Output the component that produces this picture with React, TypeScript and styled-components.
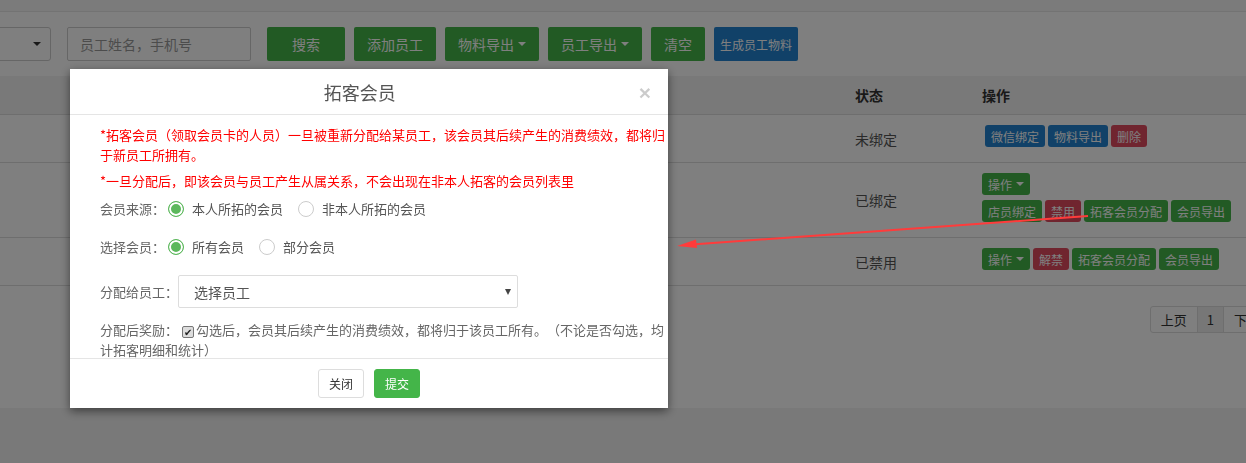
import React from 'react'
import styled, { createGlobalStyle, css } from 'styled-components'

const GlobalStyle = createGlobalStyle`
  html, body {
    margin: 0;
    padding: 0;
    overflow: hidden;
    background: #f2f2f2;
  }
  body {
    font-family: "Noto Sans CJK SC", "Liberation Sans", sans-serif;
    font-size: 14px;
    color: #333;
    text-spacing-trim: space-all;
  }
  * { box-sizing: border-box; }
`

type Tone = 'green' | 'blue' | 'red'

const tones: Record<Tone, string> = {
  green: '#44b549',
  blue: '#2283d0',
  red: '#e04a5f'
}

const Page = styled.div`
  width: 1300px;
  min-height: 463px;
  background: #f2f2f2;
`

const TopStrip = styled.div`
  height: 12px;
  background: #f7f7f7;
  border-bottom: 1px solid #e6e6e6;
`

const Main = styled.main`
  height: 396px;
  background: #fff;
`

const Toolbar = styled.div`
  display: flex;
  align-items: center;
  gap: 9px;
  height: 64px;
  padding: 15px 0;
`

const Caret = styled.span`
  display: inline-block;
  width: 0;
  height: 0;
  margin-left: 4px;
  border-top: 4px solid currentColor;
  border-left: 4px solid transparent;
  border-right: 4px solid transparent;
`

const SelectBox = styled.div`
  display: flex;
  align-items: center;
  justify-content: flex-end;
  width: 131px;
  height: 34px;
  margin-left: -80px;
  margin-right: 7px;
  padding-right: 9px;
  border: 1px solid #ccc;
  border-radius: 3px;
  color: #333;
`

const SearchInput = styled.div`
  display: flex;
  align-items: center;
  width: 184px;
  height: 34px;
  margin-right: 7px;
  padding-left: 12px;
  border: 1px solid #ccc;
  border-radius: 2px;
  color: #999;
  font-size: 14px;
`

const ToolButton = styled.button<{ $tone?: Tone; $pad?: number; $small?: boolean }>(
  props => css`
    display: flex;
    align-items: center;
    height: 34px;
    padding: 0 ${props.$pad ?? 13}px;
    border: none;
    border-radius: 2px;
    background: ${tones[props.$tone ?? 'green']};
    color: #fff;
    font-family: inherit;
    font-size: ${props.$small ? 12 : 14}px;
  `
)

const gridCols = css`
  display: grid;
  grid-template-columns: 847px 127px 1fr;
`

const HeadRow = styled.div`
  ${gridCols};
  align-items: center;
  height: 39px;
  background: #f3f3f3;
  border-bottom: 1px solid #ddd;
  font-weight: bold;
`

const Row = styled.div`
  ${gridCols};
  align-items: center;
  padding: 10px 0;
  border-bottom: 1px solid #ddd;
`

const Cell = styled.div<{ $head?: boolean }>(
  props => css`
    padding-left: 8px;
    color: ${props.$head ? '#333' : '#555'};
    line-height: 20px;
  `
)

const ActionCell = styled.div<{ $indent?: number }>(
  props => css`
    display: flex;
    flex-direction: column;
    align-items: flex-start;
    gap: 5px;
    padding: 0 0 5px ${8 + (props.$indent ?? 0)}px;
  `
)

const ActionLine = styled.div`
  display: flex;
  gap: 3px;
`

const ActBtn = styled.button<{ $tone: Tone }>(
  props => css`
    display: flex;
    align-items: center;
    height: 22px;
    padding: 0 6px;
    border: none;
    border-radius: 3px;
    background: ${tones[props.$tone]};
    color: #fff;
    font-family: inherit;
    font-size: 12px;
  `
)

const Pager = styled.div`
  display: flex;
  justify-content: flex-end;
  margin-top: 20px;
  padding-right: 29px;
`

const PageItem = styled.span<{ $active?: boolean }>(
  props => css`
    display: flex;
    align-items: center;
    height: 27px;
    padding: 0 ${props.$active ? 9 : 10}px;
    margin-left: -1px;
    border: 1px solid #ddd;
    background: ${props.$active ? '#eee' : '#fff'};
    color: #333;
    font-size: 13px;

    &:first-child {
      border-radius: 3px 0 0 3px;
    }
  `
)

const Overlay = styled.div`
  position: fixed;
  inset: 0;
  background: rgba(0, 0, 0, 0.5);
`

const Dialog = styled.section`
  position: absolute;
  left: 70px;
  top: 69px;
  width: 598px;
  background: #fff;
  box-shadow: 0 3px 9px rgba(0, 0, 0, 0.5);
`

const DialogHeader = styled.header`
  display: flex;
  align-items: center;
  height: 46px;
  padding: 0 15px;
  border-bottom: 1px solid #e5e5e5;
`

const DialogTitle = styled.h4`
  flex: 1;
  margin: 0;
  text-align: center;
  font-size: 18px;
  font-weight: normal;
  color: #555;
`

const CloseButton = styled.button`
  margin: 2px 2px 0 4px;
  padding: 0;
  border: none;
  background: none;
  font-family: "Liberation Sans", Arial, sans-serif;
  font-size: 21px;
  font-weight: bold;
  line-height: 1;
  color: #000;
  opacity: 0.2;
`

const DialogBody = styled.div`
  height: 243px;
  overflow: hidden;
  padding: 10px 0 0 30px;
  font-size: 13px;
  line-height: 20px;
  color: #666;
`

const Tip = styled.p<{ $gap: number }>(
  props => css`
    margin: 0 0 ${props.$gap}px;
    color: #f00;
  `
)

const RadioRow = styled.div`
  display: flex;
  align-items: center;
  height: 20px;
  margin-bottom: 18px;
`

const FieldLabel = styled.span`
  color: #666;
`

const RadioOption = styled.label`
  display: flex;
  align-items: center;
  margin-left: 3px;
  margin-right: 12px;
  color: #555;
`

const RadioDot = styled.span<{ $checked?: boolean }>(
  props => css`
    width: 16px;
    height: 16px;
    margin-right: 8px;
    border-radius: 50%;
    border: 1px solid ${props.$checked ? '#5cb85c' : '#ccc'};
    background: ${props.$checked ? '#5cb85c' : '#fff'};
    box-shadow: ${props.$checked ? 'inset 0 0 0 2px #fff' : 'none'};
  `
)

const SelectRow = styled.div`
  display: flex;
  align-items: center;
  margin-bottom: 12px;
`

const StaffSelect = styled.div`
  display: flex;
  align-items: center;
  justify-content: space-between;
  width: 340px;
  height: 33px;
  padding: 0 6px 0 15px;
  border: 1px solid #ddd;
  border-radius: 2px;
  font-size: 14px;
  color: #555;
`

const SelectArrow = styled.span`
  width: 0;
  height: 0;
  border-top: 6px solid #444;
  border-left: 3.5px solid transparent;
  border-right: 3.5px solid transparent;
`

const Reward = styled.div`
  color: #666;
`

const CheckBox = styled.span`
  display: inline-flex;
  align-items: center;
  justify-content: center;
  width: 12px;
  height: 12px;
  margin: 0 2px 0 4px;
  vertical-align: -1px;
  border: 1px solid #777;
  border-radius: 2px;
  background: #ddd;
  color: #222;
  font-size: 10px;
  line-height: 1;
`

const DialogFooter = styled.footer`
  display: flex;
  justify-content: center;
  gap: 10px;
  padding: 10px;
  border-top: 1px solid #e5e5e5;
`

const FooterButton = styled.button<{ $primary?: boolean }>(
  props => css`
    height: 29px;
    padding: 0 10px;
    border: 1px solid ${props.$primary ? '#44b549' : '#ddd'};
    border-radius: 3px;
    background: ${props.$primary ? '#44b549' : '#fff'};
    color: ${props.$primary ? '#fff' : '#333'};
    font-family: inherit;
    font-size: 12px;
  `
)

const Annotation = styled.svg`
  position: fixed;
  inset: 0;
  width: 100%;
  height: 100%;
  pointer-events: none;
`

const Radio: React.FC<{ checked?: boolean; label: string }> = ({ checked, label }) => (
  <RadioOption>
    <RadioDot $checked={checked} />
    {label}
  </RadioOption>
)

export default function App() {
  return (
    <>
      <GlobalStyle />
      <Page>
        <TopStrip />
        <Main>
          <Toolbar>
            <SelectBox>
              <Caret />
            </SelectBox>
            <SearchInput>员工姓名，手机号</SearchInput>
            <ToolButton $pad={25}>搜索</ToolButton>
            <ToolButton>添加员工</ToolButton>
            <ToolButton>
              物料导出
              <Caret />
            </ToolButton>
            <ToolButton>
              员工导出
              <Caret />
            </ToolButton>
            <ToolButton>清空</ToolButton>
            <ToolButton $tone="blue" $pad={6} $small>
              生成员工物料
            </ToolButton>
          </Toolbar>

          <HeadRow>
            <Cell />
            <Cell $head>状态</Cell>
            <Cell $head>操作</Cell>
          </HeadRow>

          <Row>
            <Cell />
            <Cell>未绑定</Cell>
            <ActionCell $indent={3}>
              <ActionLine>
                <ActBtn $tone="blue">微信绑定</ActBtn>
                <ActBtn $tone="blue">物料导出</ActBtn>
                <ActBtn $tone="red">删除</ActBtn>
              </ActionLine>
            </ActionCell>
          </Row>

          <Row>
            <Cell />
            <Cell>已绑定</Cell>
            <ActionCell>
              <ActionLine>
                <ActBtn $tone="green">
                  操作
                  <Caret />
                </ActBtn>
              </ActionLine>
              <ActionLine>
                <ActBtn $tone="green">店员绑定</ActBtn>
                <ActBtn $tone="red">禁用</ActBtn>
                <ActBtn $tone="green">拓客会员分配</ActBtn>
                <ActBtn $tone="green">会员导出</ActBtn>
              </ActionLine>
            </ActionCell>
          </Row>

          <Row>
            <Cell />
            <Cell>已禁用</Cell>
            <ActionCell>
              <ActionLine>
                <ActBtn $tone="green">
                  操作
                  <Caret />
                </ActBtn>
                <ActBtn $tone="red">解禁</ActBtn>
                <ActBtn $tone="green">拓客会员分配</ActBtn>
                <ActBtn $tone="green">会员导出</ActBtn>
              </ActionLine>
            </ActionCell>
          </Row>

          <Pager>
            <PageItem>上页</PageItem>
            <PageItem $active>1</PageItem>
            <PageItem>下页</PageItem>
          </Pager>
        </Main>
      </Page>

      <Overlay>
        <Dialog>
          <DialogHeader>
            <DialogTitle>拓客会员</DialogTitle>
            <CloseButton>×</CloseButton>
          </DialogHeader>
          <DialogBody>
            <Tip $gap={6}>
              *拓客会员（领取会员卡的人员）一旦被重新分配给某员工，该会员其后续产生的消费绩效，都将归于新员工所拥有。
            </Tip>
            <Tip $gap={8}>*一旦分配后，即该会员与员工产生从属关系，不会出现在非本人拓客的会员列表里</Tip>
            <RadioRow>
              <FieldLabel>会员来源：</FieldLabel>
              <Radio checked label="本人所拓的会员" />
              <Radio label="非本人所拓的会员" />
            </RadioRow>
            <RadioRow>
              <FieldLabel>选择会员：</FieldLabel>
              <Radio checked label="所有会员" />
              <Radio label="部分会员" />
            </RadioRow>
            <SelectRow>
              <FieldLabel>分配给员工：</FieldLabel>
              <StaffSelect>
                选择员工
                <SelectArrow />
              </StaffSelect>
            </SelectRow>
            <Reward>
              分配后奖励：
              <CheckBox>✔</CheckBox>
              勾选后，会员其后续产生的消费绩效，都将归于该员工所有。（不论是否勾选，均计拓客明细和统计）
            </Reward>
          </DialogBody>
          <DialogFooter>
            <FooterButton>关闭</FooterButton>
            <FooterButton $primary>提交</FooterButton>
          </DialogFooter>
        </Dialog>
      </Overlay>

      <Annotation>
        <line x1="1088" y1="216" x2="692" y2="244.5" stroke="#ff3b3b" strokeWidth="2" />
        <polygon points="677,246 696,239.5 697,248" fill="#ff3b3b" />
      </Annotation>
    </>
  )
}
